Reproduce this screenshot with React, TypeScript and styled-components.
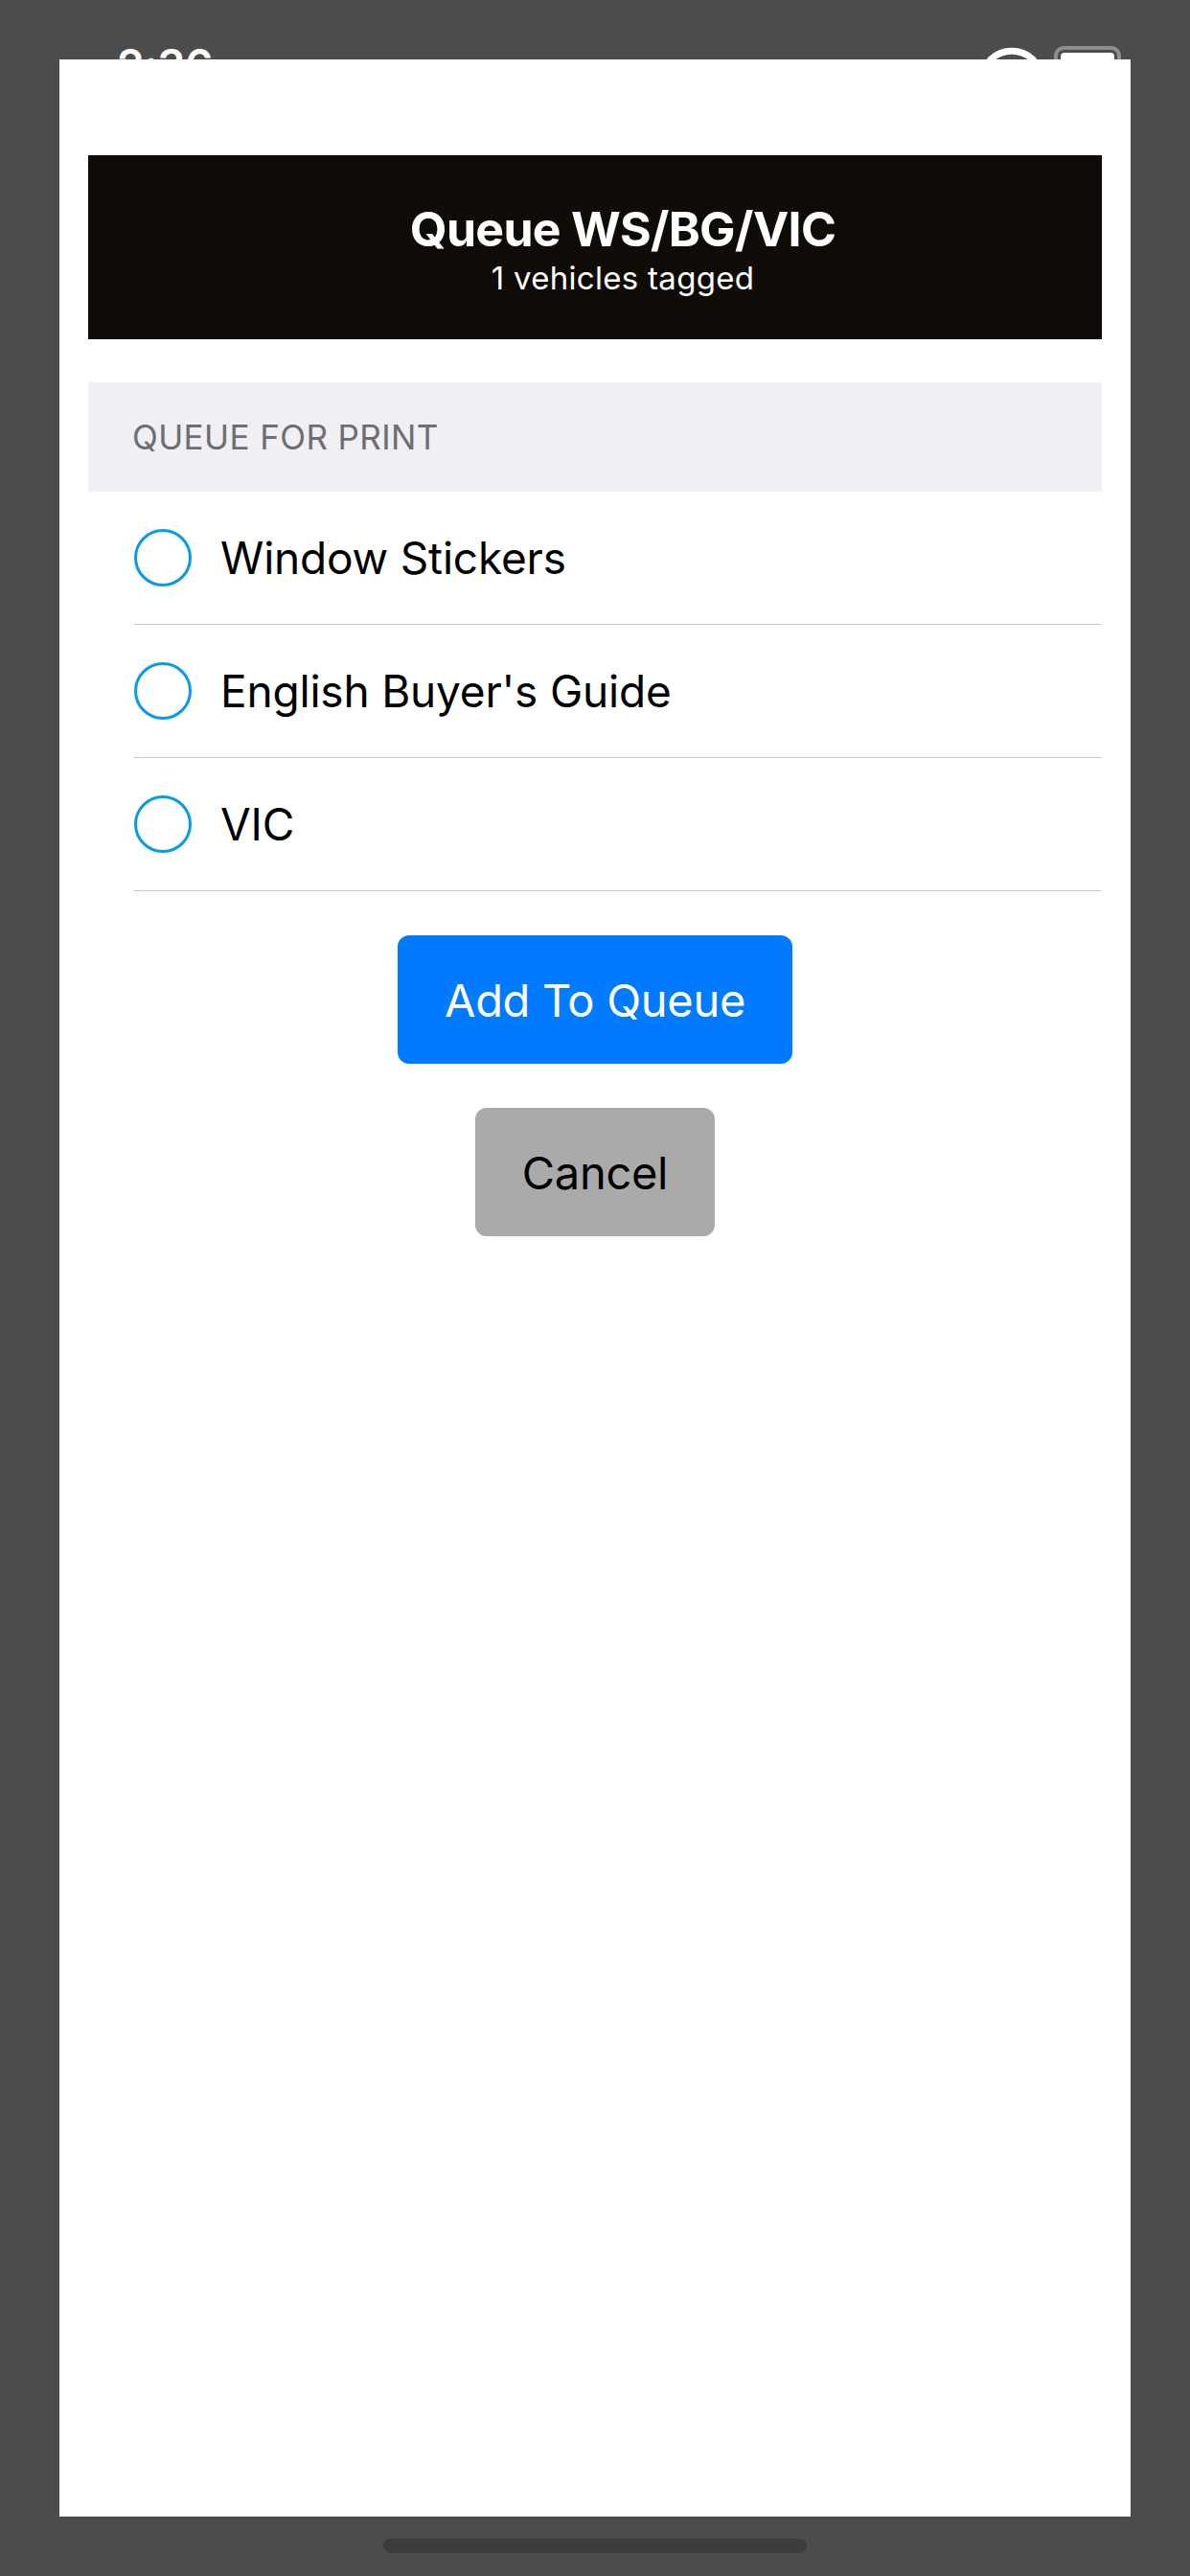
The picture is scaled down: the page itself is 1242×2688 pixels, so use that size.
import React, { useState } from "react";
import styled, { createGlobalStyle } from "styled-components";

const GlobalStyle = createGlobalStyle`
  html, body {
    margin: 0;
    padding: 0;
    background: #4c4c4c;
  }
  body {
    font-family: Inter, "Noto Sans", "Liberation Sans", sans-serif;
    -webkit-font-smoothing: antialiased;
  }
`;

const Screen = styled.div`
  width: 1242px;
  height: 2688px;
  display: flex;
  flex-direction: column;
  background: #4c4c4c;
  overflow: hidden;
`;

const StatusBar = styled.div`
  height: 62px;
  flex: none;
  display: flex;
  justify-content: space-between;
  align-items: flex-start;
  padding: 40px 72px 0 122px;
  box-sizing: border-box;
  overflow: visible;
  position: relative;
  z-index: 0;
`;

const Clock = styled.span`
  color: #ffffff;
  font-size: 46px;
  font-weight: 600;
  letter-spacing: -0.5px;
`;

const StatusIcons = styled.div`
  display: flex;
  align-items: flex-start;
  gap: 18px;
  padding-top: 8px;
`;

const Battery = styled.div`
  width: 70px;
  height: 34px;
  box-sizing: border-box;
  border: 4px solid #8e8e8e;
  border-radius: 10px;
  padding: 3px;
  position: relative;

  &::before {
    content: "";
    display: block;
    width: 100%;
    height: 100%;
    background: #ffffff;
    border-radius: 4px;
  }
`;

const Sheet = styled.div`
  position: relative;
  z-index: 1;
  margin: 0 62px;
  height: 2564px;
  flex: none;
  background: #ffffff;
  padding: 100px 30px 0;
  box-sizing: border-box;
  display: flex;
  flex-direction: column;
`;

const Header = styled.div`
  height: 192px;
  background: #0f0c08;
  display: flex;
  flex-direction: column;
  align-items: center;
  justify-content: center;
  padding-left: 58px;
  color: #ffffff;
`;

const Title = styled.div`
  font-size: 50px;
  font-weight: 700;
  line-height: 60px;
  letter-spacing: -0.7px;
  margin-top: 2px;
`;

const Subtitle = styled.div`
  font-size: 33px;
  font-weight: 400;
  line-height: 38px;
  letter-spacing: 0.3px;
  margin-top: 2px;
`;

const SectionHeader = styled.div`
  margin-top: 45px;
  height: 114px;
  background: #efeff4;
  display: flex;
  align-items: center;
  padding-left: 46px;
  color: #6d6d72;
  font-size: 35px;
  font-weight: 400;
  letter-spacing: 0.4px;
`;

const OptionList = styled.div`
  margin-left: 48px;
  display: flex;
  flex-direction: column;
`;

const OptionRow = styled.label`
  height: 139px;
  box-sizing: border-box;
  border-bottom: 1.5px solid #c8c7cc;
  display: flex;
  align-items: center;
  gap: 30px;
  cursor: pointer;
`;

const Radio = styled.span<{ $checked: boolean }>`
  width: 60px;
  height: 60px;
  box-sizing: border-box;
  border-radius: 50%;
  border: 3px solid #0a9be6;
  flex: none;
  display: flex;
  align-items: center;
  justify-content: center;

  &::after {
    content: "";
    width: 34px;
    height: 34px;
    border-radius: 50%;
    background: ${(p) => (p.$checked ? "#0a9be6" : "transparent")};
  }
`;

const OptionText = styled.span`
  font-size: 46px;
  color: #000000;
  letter-spacing: -0.2px;
`;

const Actions = styled.div`
  margin-top: 46px;
  display: flex;
  flex-direction: column;
  align-items: center;
  gap: 46px;
`;

const ActionButton = styled.button<{ $primary?: boolean }>`
  height: 134px;
  width: ${(p) => (p.$primary ? "412px" : "250px")};
  border: none;
  border-radius: 12px;
  background: ${(p) => (p.$primary ? "#007aff" : "#aaaaaa")};
  color: ${(p) => (p.$primary ? "#ffffff" : "#000000")};
  font-family: inherit;
  font-size: 47px;
  font-weight: 400;
  letter-spacing: -0.3px;
  cursor: pointer;
`;

const HomeBar = styled.div`
  flex: none;
  margin: 23px auto 0;
  width: 442px;
  height: 15px;
  border-radius: 8px;
  background: #3c3c3c;
`;

const options = ["Window Stickers", "English Buyer's Guide", "VIC"];

const WifiIcon = () => (
  <svg width="52" height="40" viewBox="0 0 52 40">
    <path
      d="M4 14 A32 32 0 0 1 48 14"
      fill="none"
      stroke="#ffffff"
      strokeWidth="7"
      strokeLinecap="round"
    />
    <path
      d="M13 24 A19 19 0 0 1 39 24"
      fill="none"
      stroke="#ffffff"
      strokeWidth="7"
      strokeLinecap="round"
    />
  </svg>
);

const App: React.FC = () => {
  const [selected, setSelected] = useState<string[]>([]);

  const toggle = (name: string) =>
    setSelected((prev) =>
      prev.includes(name) ? prev.filter((n) => n !== name) : [...prev, name]
    );

  return (
    <>
      <GlobalStyle />
      <Screen>
        <StatusBar>
          <Clock>2:36</Clock>
          <StatusIcons>
            <WifiIcon />
            <Battery />
          </StatusIcons>
        </StatusBar>
        <Sheet>
          <Header>
            <Title>Queue WS/BG/VIC</Title>
            <Subtitle>1 vehicles tagged</Subtitle>
          </Header>
          <SectionHeader>QUEUE FOR PRINT</SectionHeader>
          <OptionList>
            {options.map((name) => (
              <OptionRow key={name} onClick={() => toggle(name)}>
                <Radio $checked={selected.includes(name)} />
                <OptionText>{name}</OptionText>
              </OptionRow>
            ))}
          </OptionList>
          <Actions>
            <ActionButton $primary>Add To Queue</ActionButton>
            <ActionButton>Cancel</ActionButton>
          </Actions>
        </Sheet>
        <HomeBar />
      </Screen>
    </>
  );
};

export default App;
